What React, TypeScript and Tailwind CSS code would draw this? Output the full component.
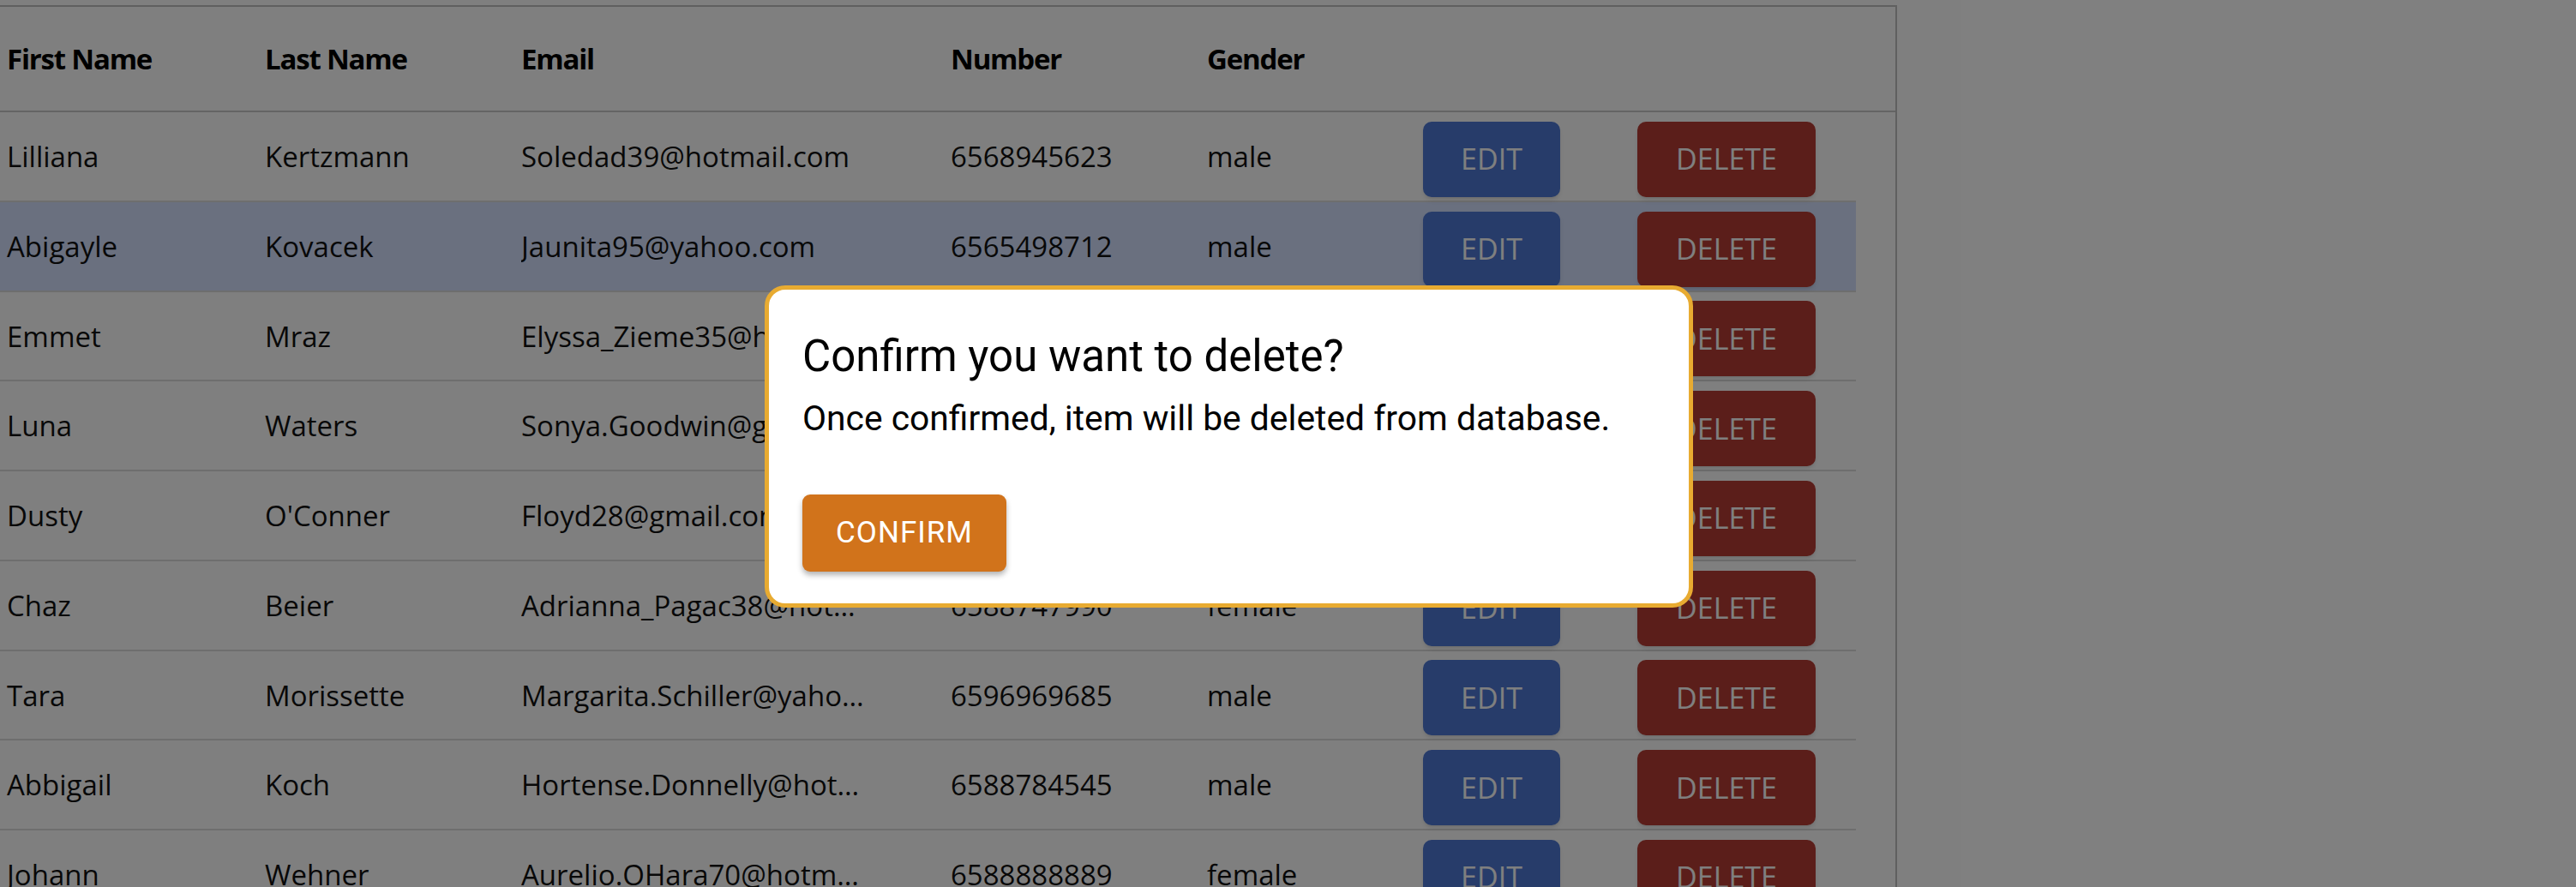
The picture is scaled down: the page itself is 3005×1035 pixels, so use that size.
import React from "react";

interface Person {
  first: string;
  last: string;
  email: string;
  number: string;
  gender: string;
}

const people: Person[] = [
  { first: "Lilliana", last: "Kertzmann", email: "Soledad39@hotmail.com", number: "6568945623", gender: "male" },
  { first: "Abigayle", last: "Kovacek", email: "Jaunita95@yahoo.com", number: "6565498712", gender: "male" },
  { first: "Emmet", last: "Mraz", email: "Elyssa_Zieme35@hotmail.com", number: "6578412236", gender: "female" },
  { first: "Luna", last: "Waters", email: "Sonya.Goodwin@gmail.com", number: "6591237845", gender: "female" },
  { first: "Dusty", last: "O'Conner", email: "Floyd28@gmail.com", number: "6583326714", gender: "male" },
  { first: "Chaz", last: "Beier", email: "Adrianna_Pagac38@hotmail.com", number: "6588747990", gender: "female" },
  { first: "Tara", last: "Morissette", email: "Margarita.Schiller@yahoo.com", number: "6596969685", gender: "male" },
  { first: "Abbigail", last: "Koch", email: "Hortense.Donnelly@hotmail.com", number: "6588784545", gender: "male" },
  { first: "Johann", last: "Wehner", email: "Aurelio.OHara70@hotmail.com", number: "6588888889", gender: "female" },
];

const cols = "grid grid-cols-[301px_299px_501px_299px_250px_250px_1fr]";

function Row({ p, selected }: { p: Person; selected?: boolean }) {
  return (
    <div
      className={`${cols} h-[104.75px] w-[2165px] border-b-2 border-[#dcdcdc] items-center text-[33px] text-[#111] ${
        selected ? "bg-[#d4e0fe]" : ""
      }`}
    >
      <div className="pl-[8px] pt-[1px]">{p.first}</div>
      <div className="pl-[8px] pt-[1px]">{p.last}</div>
      <div className="pl-[8px] pt-[1px]">
        <div className="max-w-[400px] truncate">{p.email}</div>
      </div>
      <div className="pl-[8px] pt-[1px]">{p.number}</div>
      <div className="pl-[8px] pt-[1px]">{p.gender}</div>
      <div className="pl-[10px] pt-[7px]">
        <button className="w-[160px] h-[88px] rounded-[10px] bg-[#4e79d5] text-white text-[34px] uppercase shadow-md">
          Edit
        </button>
      </div>
      <div className="pl-[10px] pt-[7px]">
        <button className="w-[208px] h-[88px] rounded-[10px] bg-[#b63d35] text-white text-[34px] uppercase shadow-md">
          Delete
        </button>
      </div>
    </div>
  );
}

export default function App() {
  return (
    <div className="relative w-[3005px] h-[1035px] overflow-hidden bg-white font-['Open_Sans',sans-serif]">
      {/* Table */}
      <div className="mt-[6px] w-[2213px] h-[1100px] border-t-2 border-r-2 border-[#c0c0c0]">
        <div
          className={`${cols} h-[123px] border-b-2 border-[#c8c8c8] items-center text-[33px] font-bold tracking-[-1.2px] text-black`}
        >
          <div className="pl-[8px]">First Name</div>
          <div className="pl-[8px]">Last Name</div>
          <div className="pl-[8px]">Email</div>
          <div className="pl-[8px]">Number</div>
          <div className="pl-[8px]">Gender</div>
          <div />
          <div />
        </div>
        {people.map((p, i) => (
          <Row key={p.first} p={p} selected={i === 1} />
        ))}
      </div>

      {/* Backdrop */}
      <div className="absolute inset-0 bg-black/50" />

      {/* Confirm dialog */}
      <div className="absolute left-[892px] top-[333px] w-[1083px] rounded-[24px] border-[5px] border-[#e8ab31] bg-white px-[39px] pt-[39px] pb-[37px] font-['Roboto',sans-serif] text-black">
        <h2 className="text-[51px] leading-[78px] font-normal">Confirm you want to delete?</h2>
        <p className="mt-[4px] text-[40.8px] leading-[58px]">
          Once confirmed, item will be deleted from database.
        </p>
        <button className="mt-[60px] h-[90px] w-[238px] rounded-[9px] bg-[#d1731b] text-white text-[35px] font-normal tracking-[1px] uppercase shadow-[0_4px_6px_rgba(0,0,0,0.3)]">
          Confirm
        </button>
      </div>
    </div>
  );
}
